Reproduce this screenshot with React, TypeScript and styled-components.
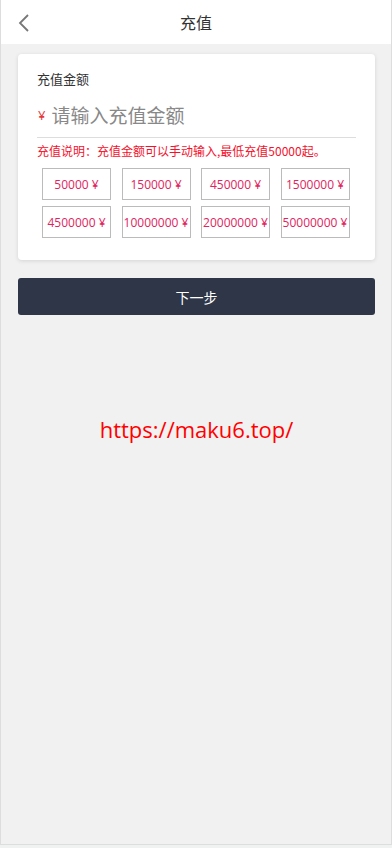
import React from 'react';
import styled, { createGlobalStyle } from 'styled-components';

const amounts = ['50000', '150000', '450000', '1500000', '4500000', '10000000', '20000000', '50000000'];

const GlobalStyle = createGlobalStyle`
  html, body {
    margin: 0;
    padding: 0;
    background: #f0f2f2;
    font-family: "Open Sans", "Noto Sans CJK SC", sans-serif;
  }
  * { box-sizing: border-box; }
`;

const App = () => {
  return (
    <>
      <GlobalStyle />
      <Page>
        <Header>
          <Back>
            <svg width="14" height="20" viewBox="0 0 14 20">
              <path d="M11 2 L3 10 L11 18" fill="none" stroke="#777" strokeWidth="1.8" />
            </svg>
          </Back>
          <Title>充值</Title>
        </Header>
        <Body>
          <Card>
            <Label>充值金额</Label>
            <InputRow>
              <Yen>¥</Yen>
              <AmountInput placeholder="请输入充值金额" />
            </InputRow>
            <Notice>充值说明：充值金额可以手动输入,最低充值50000起。</Notice>
            <Grid>
              {amounts.map((a) => (
                <Option key={a}>{a} ¥</Option>
              ))}
            </Grid>
          </Card>
          <NextButton>下一步</NextButton>
          <Link>https://maku6.top/</Link>
        </Body>
      </Page>
    </>
  );
};

const Page = styled.div`
  width: 392px;
  height: 845px;
  background: #f1f1f1;
  border: 1px solid #dddddd;
  border-top: none;
  display: flex;
  flex-direction: column;
`;

const Header = styled.div`
  height: 44px;
  background: #fff;
  display: flex;
  align-items: center;
  justify-content: center;
  position: relative;
`;

const Back = styled.div`
  position: absolute;
  left: 16px;
  top: 13px;
  display: flex;
`;

const Title = styled.div`
  font-size: 16px;
  color: #333;
  font-family: "Noto Sans CJK SC", sans-serif;
`;

const Body = styled.div`
  padding: 10px 16px 0 17px;
  display: flex;
  flex-direction: column;
`;

const Card = styled.div`
  background: #fff;
  border-radius: 4px;
  box-shadow: 0 1px 4px rgba(0, 0, 0, 0.12);
  padding: 16px 19px 22px 19px;
`;

const Label = styled.div`
  font-size: 13px;
  color: #333;
  line-height: 18px;
  font-family: "Noto Sans CJK SC", sans-serif;
`;

const InputRow = styled.div`
  display: flex;
  align-items: center;
  margin-top: 10px;
  height: 40px;
  padding-bottom: 6px;
  border-bottom: 1px solid #ddd;
`;

const Yen = styled.span`
  color: #e4393c;
  font-size: 13px;
  margin: 0 6px 0 1px;
`;

const AmountInput = styled.input`
  border: none;
  outline: none;
  flex: 1;
  font-size: 19px;
  font-family: "Noto Sans CJK SC", sans-serif;
  padding: 0;
  color: #333;
  &::placeholder {
    color: #888;
  }
`;

const Notice = styled.div`
  color: #f5102c;
  font-size: 12px;
  line-height: 16px;
  margin-top: 5px;
  font-family: "Noto Sans CJK SC", sans-serif;
`;

const Grid = styled.div`
  display: grid;
  grid-template-columns: repeat(4, 69px);
  column-gap: 10.5px;
  row-gap: 6px;
  padding: 0 5px;
  margin-top: 9px;
`;

const Option = styled.div`
  height: 32px;
  border: 1px solid #bbb;
  display: flex;
  align-items: center;
  justify-content: center;
  color: #e0245e;
  font-size: 12px;
  white-space: nowrap;
`;

const NextButton = styled.button`
  margin-top: 18px;
  height: 37px;
  border: none;
  border-radius: 3px;
  background: #2e3648;
  color: #fff;
  font-size: 14px;
  font-family: "Noto Sans CJK SC", sans-serif;
`;

const Link = styled.div`
  margin-top: 99px;
  text-align: center;
  color: #ff0000;
  font-size: 22px;
  font-family: "Open Sans", sans-serif;
`;

export default App;
